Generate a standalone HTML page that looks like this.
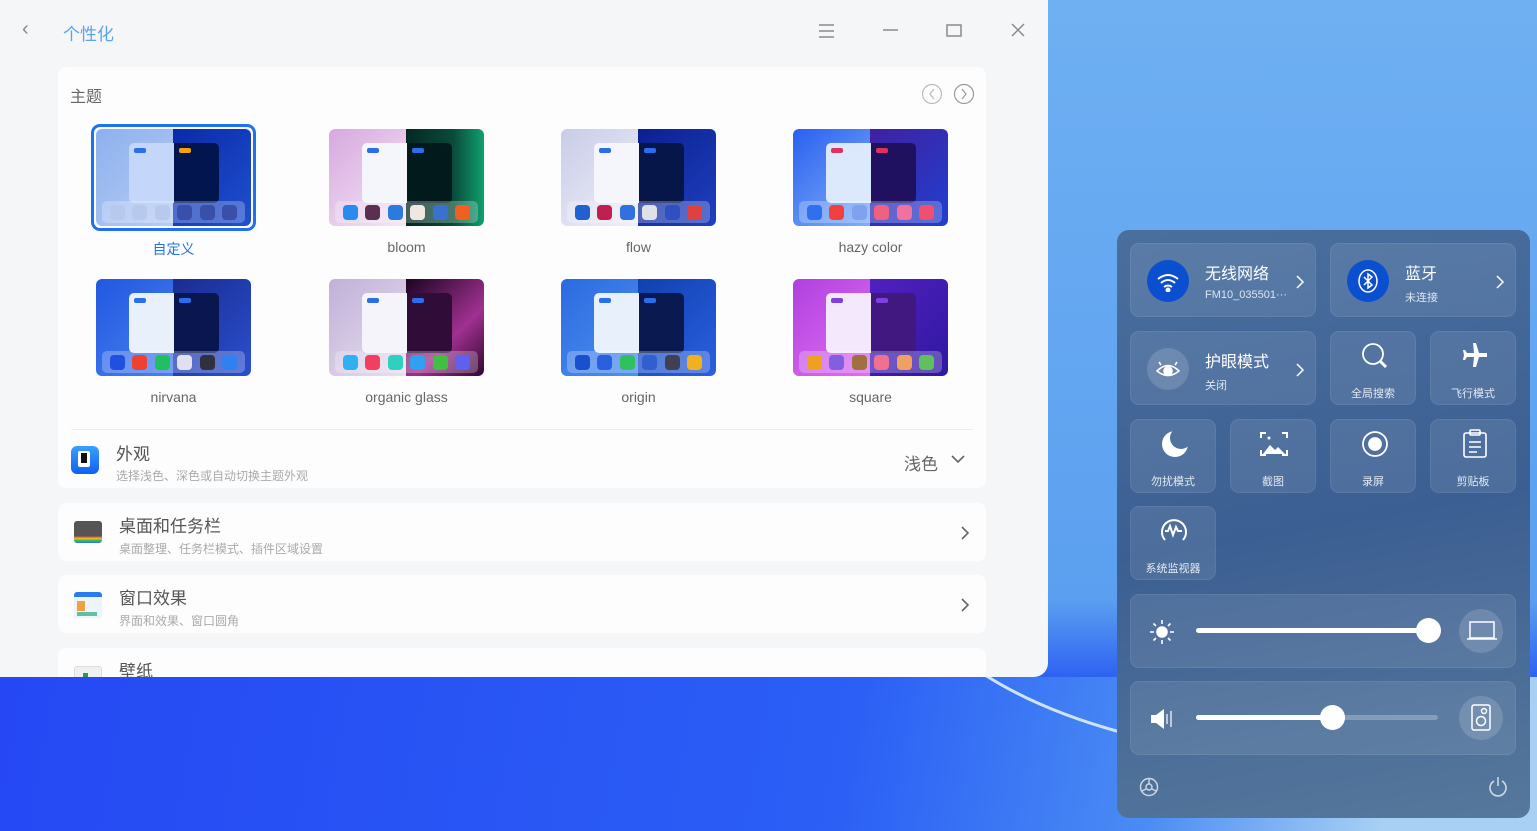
<!DOCTYPE html>
<html><head><meta charset="utf-8"><style>
*{box-sizing:border-box;margin:0;padding:0}
body{width:1537px;height:831px;overflow:hidden;position:relative;font-family:"Liberation Sans","Noto Sans CJK SC",sans-serif;background:linear-gradient(180deg,#6fb0f2 0,#5b9ff0 600px,#2c60f2 680px,#2455f0 831px)}
.desk1{position:absolute;left:0;top:677px;width:1537px;height:154px;background:linear-gradient(100deg,#2548f4 0,#2b5ff5 55%,#4a8cf4 75%,#a8d0f4 90%)}
.win{position:absolute;left:0;top:0;width:1048px;height:677px;background:#f5f6f7;border-radius:0 0 14px 0;overflow:hidden}
.t{position:absolute;white-space:nowrap}
.card{position:absolute;left:58px;width:928px;background:#fdfdfd;border-radius:8px}
.th{position:absolute;width:155px;height:97px;border-radius:6px;overflow:hidden}
.th .l,.th .r{position:absolute;top:0;height:97px;width:78px}
.th .l{left:0}.th .r{left:77px}
.th .w1{position:absolute;left:33px;top:14px;width:45px;height:60px;border-radius:5px 0 0 5px}
.th .w2{position:absolute;left:78px;top:14px;width:45px;height:60px;border-radius:0 5px 5px 0}
.th .b1{position:absolute;left:38px;top:19px;width:12px;height:5px;border-radius:2px;background:#2a6ef0}
.th .b2{position:absolute;left:83px;top:19px;width:12px;height:5px;border-radius:2px;background:#2a6ef0}
.th .dock{position:absolute;left:6px;top:72px;width:143px;height:22px;border-radius:5px;background:rgba(255,255,255,.25);display:flex;justify-content:space-around;align-items:center;padding:0 4px}
.th .dock i{width:15px;height:15px;border-radius:4px;display:block}
.lbl{position:absolute;width:155px;text-align:center;font-size:14px;color:#666}
.pn{position:absolute;left:1117px;top:230px;width:413px;height:588px;border-radius:12px;background:linear-gradient(170deg,#4a6f9e 0,#3c5f93 50%,#56789c 100%)}
.tile{position:absolute;background:rgba(255,255,255,.09);border:1px solid rgba(255,255,255,.07);border-radius:9px;color:#fff}
.tile .c{position:absolute;font-size:11px;color:#e3eaf3;width:100%;text-align:center;top:53px}
.circ{position:absolute;left:16px;top:16px;width:42px;height:42px;border-radius:50%}
</style></head><body>
<div class="desk1"></div>
<svg style="position:absolute;left:980px;top:670px" width="150" height="70"><path d="M5 5 Q60 40 140 62" stroke="#cfe3fa" stroke-width="3" fill="none"/></svg>

<div class="win">
<div class="t" style="left:22px;top:18px;font-size:20px;color:#888">&#8249;</div>
<div class="t" style="left:63px;top:20px;font-size:17px;color:#5aa2f2">个性化</div>
<svg style="position:absolute;left:818px;top:22px" width="220" height="18" fill="none" stroke="#8a8a8a" stroke-width="1.5"><path d="M1 3h15M1 9h15M1 15h15"/><path d="M65 8h15"/><rect x="129" y="3" width="14" height="11"/><path d="M194 2l12 12M206 2l-12 12"/></svg>

<div class="card" style="top:67px;height:421px">
<div class="t" style="left:12px;top:16px;font-size:16px;color:#666">主题</div>
<svg style="position:absolute;left:864px;top:16px" width="56" height="22" fill="none" stroke="#bbb" stroke-width="1.2"><circle cx="10" cy="11" r="9.5"/><path d="M12 6l-4 5 4 5"/><circle cx="42" cy="11" r="9.5" stroke="#999"/><path d="M40 6l4 5-4 5" stroke="#999"/></svg>
<div style="position:absolute;left:13px;top:362px;width:902px;height:1px;background:#eee"></div>
<div style="position:absolute;left:13px;top:379px;width:28px;height:28px;border-radius:6px;background:linear-gradient(#3aa0ff,#1060f0)"><div style="position:absolute;left:7px;top:5px;width:12px;height:16px;background:#fff;border-radius:2px"></div><div style="position:absolute;left:10px;top:7px;width:6px;height:10px;background:#111"></div></div>
<div class="t" style="left:58px;top:373px;font-size:17px;color:#555">外观</div>
<div class="t" style="left:58px;top:400px;font-size:12px;color:#aaa">选择浅色、深色或自动切换主题外观</div>
<div class="t" style="left:846px;top:383px;font-size:17px;color:#666">浅色</div>
<svg style="position:absolute;left:893px;top:387px" width="14" height="10"><path d="M1 2l6 6 6-6" stroke="#666" stroke-width="1.6" fill="none"/></svg>
</div>

<div style="position:absolute;left:91px;top:124px;width:165px;height:107px;border:3px solid #1f72ef;border-radius:9px"></div>
<div class="th" style="left:96px;top:129px"><div class="l" style="background:linear-gradient(135deg,#8cb0ee,#b8ccf4)"></div><div class="r" style="background:linear-gradient(135deg,#0a2aa8,#2050d0)"></div><div class="w1" style="background:#c4d6fa"></div><div class="w2" style="background:#03154f"></div><div class="b1"></div><div class="b2" style="background:#f7a000"></div><div class="dock"><i style="background:#b8c9ee"></i><i style="background:#b8c9ee"></i><i style="background:#b8c9ee"></i><i style="background:#3a50a8"></i><i style="background:#3a50a8"></i><i style="background:#3a50a8"></i></div></div>
<div class="th" style="left:329px;top:129px"><div class="l" style="background:linear-gradient(135deg,#d8a8e0,#f4e8f4)"></div><div class="r" style="background:linear-gradient(90deg,#042824,#0a4a3a 60%,#10a070)"></div><div class="w1" style="background:#f4f6fc"></div><div class="w2" style="background:#021a1c"></div><div class="b1"></div><div class="b2"></div><div class="dock"><i style="background:#2a8af0"></i><i style="background:#5a3050"></i><i style="background:#2a7ae0"></i><i style="background:#f0e8e0"></i><i style="background:#3a70d0"></i><i style="background:#f06020"></i></div></div>
<div class="th" style="left:561px;top:129px"><div class="l" style="background:linear-gradient(135deg,#c8cce8,#f0f0f8)"></div><div class="r" style="background:linear-gradient(135deg,#0a2090,#2040c0)"></div><div class="w1" style="background:#f4f6fc"></div><div class="w2" style="background:#061648"></div><div class="b1"></div><div class="b2"></div><div class="dock"><i style="background:#2060d0"></i><i style="background:#c02050"></i><i style="background:#3070e0"></i><i style="background:#e0e0e8"></i><i style="background:#3050c0"></i><i style="background:#e04040"></i></div></div>
<div class="th" style="left:793px;top:129px"><div class="l" style="background:linear-gradient(135deg,#2a60f0,#80b0f8)"></div><div class="r" style="background:linear-gradient(135deg,#4020a0,#2040d0)"></div><div class="w1" style="background:#dce8fc"></div><div class="w2" style="background:#201060"></div><div class="b1" style="background:#e03060"></div><div class="b2" style="background:#e03060"></div><div class="dock"><i style="background:#3070f0"></i><i style="background:#f04040"></i><i style="background:#80a0f0"></i><i style="background:#f06080"></i><i style="background:#f070a0"></i><i style="background:#f05070"></i></div></div>
<div class="th" style="left:96px;top:279px"><div class="l" style="background:linear-gradient(135deg,#2058e0,#4a80f0)"></div><div class="r" style="background:linear-gradient(135deg,#1a2c90,#2a50d0)"></div><div class="w1" style="background:#e8f0fc"></div><div class="w2" style="background:#0a1650"></div><div class="b1"></div><div class="b2"></div><div class="dock"><i style="background:#2050e0"></i><i style="background:#f04030"></i><i style="background:#20c060"></i><i style="background:#e0e0f0"></i><i style="background:#303040"></i><i style="background:#3080f0"></i></div></div>
<div class="th" style="left:329px;top:279px"><div class="l" style="background:linear-gradient(135deg,#c0b0d8,#e8e0f0)"></div><div class="r" style="background:linear-gradient(135deg,#1a0420,#a03090 60%,#300830)"></div><div class="w1" style="background:#f4f4fa"></div><div class="w2" style="background:#300c38"></div><div class="b1"></div><div class="b2"></div><div class="dock"><i style="background:#30b0f0"></i><i style="background:#f04060"></i><i style="background:#30d0c0"></i><i style="background:#30a0f0"></i><i style="background:#40c040"></i><i style="background:#6060f0"></i></div></div>
<div class="th" style="left:561px;top:279px"><div class="l" style="background:linear-gradient(135deg,#2a6ae0,#5090f0)"></div><div class="r" style="background:linear-gradient(135deg,#1040b0,#2a60e0)"></div><div class="w1" style="background:#e8f0fc"></div><div class="w2" style="background:#0a1a50"></div><div class="b1"></div><div class="b2"></div><div class="dock"><i style="background:#1a50d0"></i><i style="background:#2a60e0"></i><i style="background:#30c060"></i><i style="background:#3060d0"></i><i style="background:#404050"></i><i style="background:#f0b020"></i></div></div>
<div class="th" style="left:793px;top:279px"><div class="l" style="background:linear-gradient(135deg,#b040e0,#e070f0)"></div><div class="r" style="background:linear-gradient(135deg,#5020c0,#3018a0)"></div><div class="w1" style="background:#f4e8fc"></div><div class="w2" style="background:#401880"></div><div class="b1" style="background:#8040e0"></div><div class="b2" style="background:#8040e0"></div><div class="dock"><i style="background:#f0a020"></i><i style="background:#8060e0"></i><i style="background:#a07040"></i><i style="background:#f07090"></i><i style="background:#f0a060"></i><i style="background:#60c060"></i></div></div>
<div class="lbl" style="left:96px;top:239px;color:#1f72ef">自定义</div>
<div class="lbl" style="left:329px;top:239px">bloom</div>
<div class="lbl" style="left:561px;top:239px">flow</div>
<div class="lbl" style="left:793px;top:239px">hazy color</div>
<div class="lbl" style="left:96px;top:389px">nirvana</div>
<div class="lbl" style="left:329px;top:389px">organic glass</div>
<div class="lbl" style="left:561px;top:389px">origin</div>
<div class="lbl" style="left:793px;top:389px">square</div>

<div class="card" style="top:503px;height:58px">
<div style="position:absolute;left:16px;top:18px;width:28px;height:22px;border-radius:3px;background:linear-gradient(#555 70%,#e04040 70%,#f0c020 80%,#30c060 88%,#3070f0)"></div>
<div class="t" style="left:61px;top:9px;font-size:17px;color:#555">桌面和任务栏</div>
<div class="t" style="left:61px;top:37px;font-size:12px;color:#aaa">桌面整理、任务栏模式、插件区域设置</div>
<svg style="position:absolute;left:902px;top:22px" width="10" height="16"><path d="M2 2l6 6-6 6" stroke="#666" stroke-width="1.6" fill="none"/></svg>
</div>
<div class="card" style="top:575px;height:58px">
<div style="position:absolute;left:16px;top:17px;width:28px;height:26px;border-radius:3px;background:#eef4fc;border-top:5px solid #2a7af0"><div style="position:absolute;left:3px;top:4px;width:8px;height:10px;background:#f0a040"></div><div style="position:absolute;left:3px;top:15px;width:20px;height:4px;background:#60c0a0"></div></div>
<div class="t" style="left:61px;top:9px;font-size:17px;color:#555">窗口效果</div>
<div class="t" style="left:61px;top:37px;font-size:12px;color:#aaa">界面和效果、窗口圆角</div>
<svg style="position:absolute;left:902px;top:22px" width="10" height="16"><path d="M2 2l6 6-6 6" stroke="#666" stroke-width="1.6" fill="none"/></svg>
</div>
<div class="card" style="top:648px;height:58px">
<div style="position:absolute;left:16px;top:18px;width:28px;height:24px;border-radius:3px;background:#f0f0f0;border:1px solid #ddd"><div style="position:absolute;left:8px;top:6px;width:5px;height:6px;background:#2a9a50"></div></div>
<div class="t" style="left:61px;top:9px;font-size:17px;color:#555">壁纸</div>
</div>
</div>

<div class="pn">
<div class="tile" style="left:13px;top:13px;width:186px;height:74px"><div class="circ" style="background:#0a4fd0"></div>
<svg style="position:absolute;left:25px;top:28px" width="24" height="20" fill="none" stroke="#fff" stroke-width="2"><path d="M2 7Q12-1 22 7M5 11Q12 5 19 11M8 15Q12 12 16 15"/><circle cx="12" cy="18" r="1.5" fill="#fff"/></svg>
<div class="t" style="left:74px;top:16px;font-size:16px">无线网络</div><div class="t" style="left:74px;top:45px;font-size:11px;color:#dde6f0">FM10_035501···</div>
<svg style="position:absolute;left:164px;top:30px" width="10" height="16"><path d="M2 2l6 6-6 6" stroke="#fff" stroke-width="1.5" fill="none"/></svg></div>
<div class="tile" style="left:213px;top:13px;width:186px;height:74px"><div class="circ" style="background:#0a4fd0"></div>
<svg style="position:absolute;left:26px;top:24px" width="22" height="26" fill="none" stroke="#fff" stroke-width="1.5"><ellipse cx="11" cy="13" rx="9" ry="11"/><path d="M7 9l8 8-4 3V6l4 3-8 8"/></svg>
<div class="t" style="left:74px;top:16px;font-size:16px">蓝牙</div><div class="t" style="left:74px;top:45px;font-size:11px;color:#dde6f0">未连接</div>
<svg style="position:absolute;left:164px;top:30px" width="10" height="16"><path d="M2 2l6 6-6 6" stroke="#fff" stroke-width="1.5" fill="none"/></svg></div>
<div class="tile" style="left:13px;top:101px;width:186px;height:74px"><div class="circ" style="background:rgba(255,255,255,.15)"></div>
<svg style="position:absolute;left:24px;top:28px" width="26" height="18" fill="none" stroke="#fff" stroke-width="1.6"><path d="M2 11Q13 0 24 11Q13 20 2 11z"/><circle cx="13" cy="11" r="4" fill="#fff"/><path d="M6 5l-2-3M20 5l2-3"/></svg>
<div class="t" style="left:74px;top:16px;font-size:16px">护眼模式</div><div class="t" style="left:74px;top:45px;font-size:11px;color:#dde6f0">关闭</div>
<svg style="position:absolute;left:164px;top:30px" width="10" height="16"><path d="M2 2l6 6-6 6" stroke="#fff" stroke-width="1.5" fill="none"/></svg></div>
<div class="tile" style="left:213px;top:101px;width:86px;height:74px"><svg style="position:absolute;left:30px;top:10px" width="30" height="30" fill="none" stroke="#fff" stroke-width="1.8"><circle cx="12" cy="12" r="10"/><path d="M19 19l6 6" stroke-width="3"/></svg><div class="c">全局搜索</div></div>
<div class="tile" style="left:313px;top:101px;width:86px;height:74px"><svg style="position:absolute;left:30px;top:10px" width="28" height="28" fill="#fff"><path d="M12 1h3l3 10h8v4h-8l-3 10h-3l1-10H6l-2 3H2l1-5-1-5h2l2 3h7z"/></svg><div class="c">飞行模式</div></div>
<div class="tile" style="left:13px;top:189px;width:86px;height:74px"><svg style="position:absolute;left:29px;top:9px" width="30" height="30"><defs><mask id="mm"><rect width="30" height="30" fill="#fff"/><circle cx="21" cy="9" r="11" fill="#000"/></mask></defs><circle cx="15" cy="15" r="13" fill="#fff" mask="url(#mm)"/></svg><div class="c">勿扰模式</div></div>
<div class="tile" style="left:113px;top:189px;width:86px;height:74px"><svg style="position:absolute;left:29px;top:10px" width="28" height="28" fill="none" stroke="#fff" stroke-width="2"><path d="M1 8V3h5M22 3h5v5M27 20v5h-5M6 25H1v-5"/><path d="M3 24l7-9 5 5 3-3 7 7z" fill="#fff" stroke="none"/><circle cx="9" cy="8" r="1.5" fill="#fff" stroke="none"/></svg><div class="c">截图</div></div>
<div class="tile" style="left:213px;top:189px;width:86px;height:74px"><svg style="position:absolute;left:30px;top:10px" width="28" height="28" fill="none" stroke="#fff" stroke-width="1.8"><circle cx="14" cy="14" r="12"/><circle cx="14" cy="14" r="6" fill="#fff"/></svg><div class="c">录屏</div></div>
<div class="tile" style="left:313px;top:189px;width:86px;height:74px"><svg style="position:absolute;left:31px;top:9px" width="26" height="30" fill="none" stroke="#fff" stroke-width="1.6"><rect x="2" y="4" width="22" height="24" rx="2"/><rect x="8" y="1" width="10" height="5" rx="1"/><path d="M7 13h12M7 18h12M7 23h8"/></svg><div class="c">剪贴板</div></div>
<div class="tile" style="left:13px;top:276px;width:86px;height:74px"><svg style="position:absolute;left:28px;top:9px" width="30" height="30" fill="none" stroke="#fff" stroke-width="2"><path d="M6 24A12 12 0 1 1 24 24"/><path d="M6 15h3l2-5 3 9 3-8 2 4h4"/></svg><div class="c">系统监视器</div></div>
<div class="tile" style="left:13px;top:364px;width:386px;height:74px">
<svg style="position:absolute;left:18px;top:24px" width="26" height="26" fill="#fff" stroke="#fff" stroke-width="1.6"><circle cx="13" cy="13" r="5"/><path d="M13 1v4M13 21v4M1 13h4M21 13h4M4.5 4.5l2.5 2.5M19 19l2.5 2.5M4.5 21.5L7 19M19 7l2.5-2.5"/></svg>
<div style="position:absolute;left:65px;top:33px;width:236px;height:5px;border-radius:3px;background:#fff"></div>
<div style="position:absolute;left:285px;top:23px;width:25px;height:25px;border-radius:50%;background:#fff"></div>
<div style="position:absolute;left:328px;top:14px;width:44px;height:44px;border-radius:50%;background:rgba(255,255,255,.15)"></div>
<svg style="position:absolute;left:336px;top:26px" width="30" height="20" fill="none" stroke="#fff" stroke-width="1.5"><rect x="3" y="1" width="24" height="16"/><path d="M0 18h30"/></svg></div>
<div class="tile" style="left:13px;top:451px;width:386px;height:74px">
<svg style="position:absolute;left:19px;top:24px" width="30" height="26" fill="#fff"><path d="M1 9h5l8-6v20l-8-6H1z"/><path d="M17 8v10M21 5v16" stroke="#fff" stroke-width="1.2"/></svg>
<div style="position:absolute;left:65px;top:33px;width:242px;height:5px;border-radius:3px;background:rgba(255,255,255,.25)"></div>
<div style="position:absolute;left:65px;top:33px;width:135px;height:5px;border-radius:3px;background:#fff"></div>
<div style="position:absolute;left:189px;top:23px;width:25px;height:25px;border-radius:50%;background:#fff"></div>
<div style="position:absolute;left:328px;top:14px;width:44px;height:44px;border-radius:50%;background:rgba(255,255,255,.15)"></div>
<svg style="position:absolute;left:339px;top:22px" width="22" height="28" fill="none" stroke="#fff" stroke-width="1.5"><rect x="2" y="1" width="18" height="25" rx="2"/><circle cx="11" cy="17" r="4.5"/><circle cx="14" cy="7" r="2.5"/></svg></div>
<svg style="position:absolute;left:22px;top:547px" width="20" height="20" fill="none" stroke="#ccd6e2" stroke-width="1.5"><circle cx="10" cy="10" r="8.5"/><circle cx="10" cy="10" r="3"/><path d="M10 1.5v5M3 14l4-2M17 14l-4-2"/></svg>
<svg style="position:absolute;left:371px;top:546px" width="20" height="22" fill="none" stroke="#ccd6e2" stroke-width="1.6"><path d="M6 5A8 8 0 1 0 14 5"/><path d="M10 1v9"/></svg>
</div>
</body></html>
